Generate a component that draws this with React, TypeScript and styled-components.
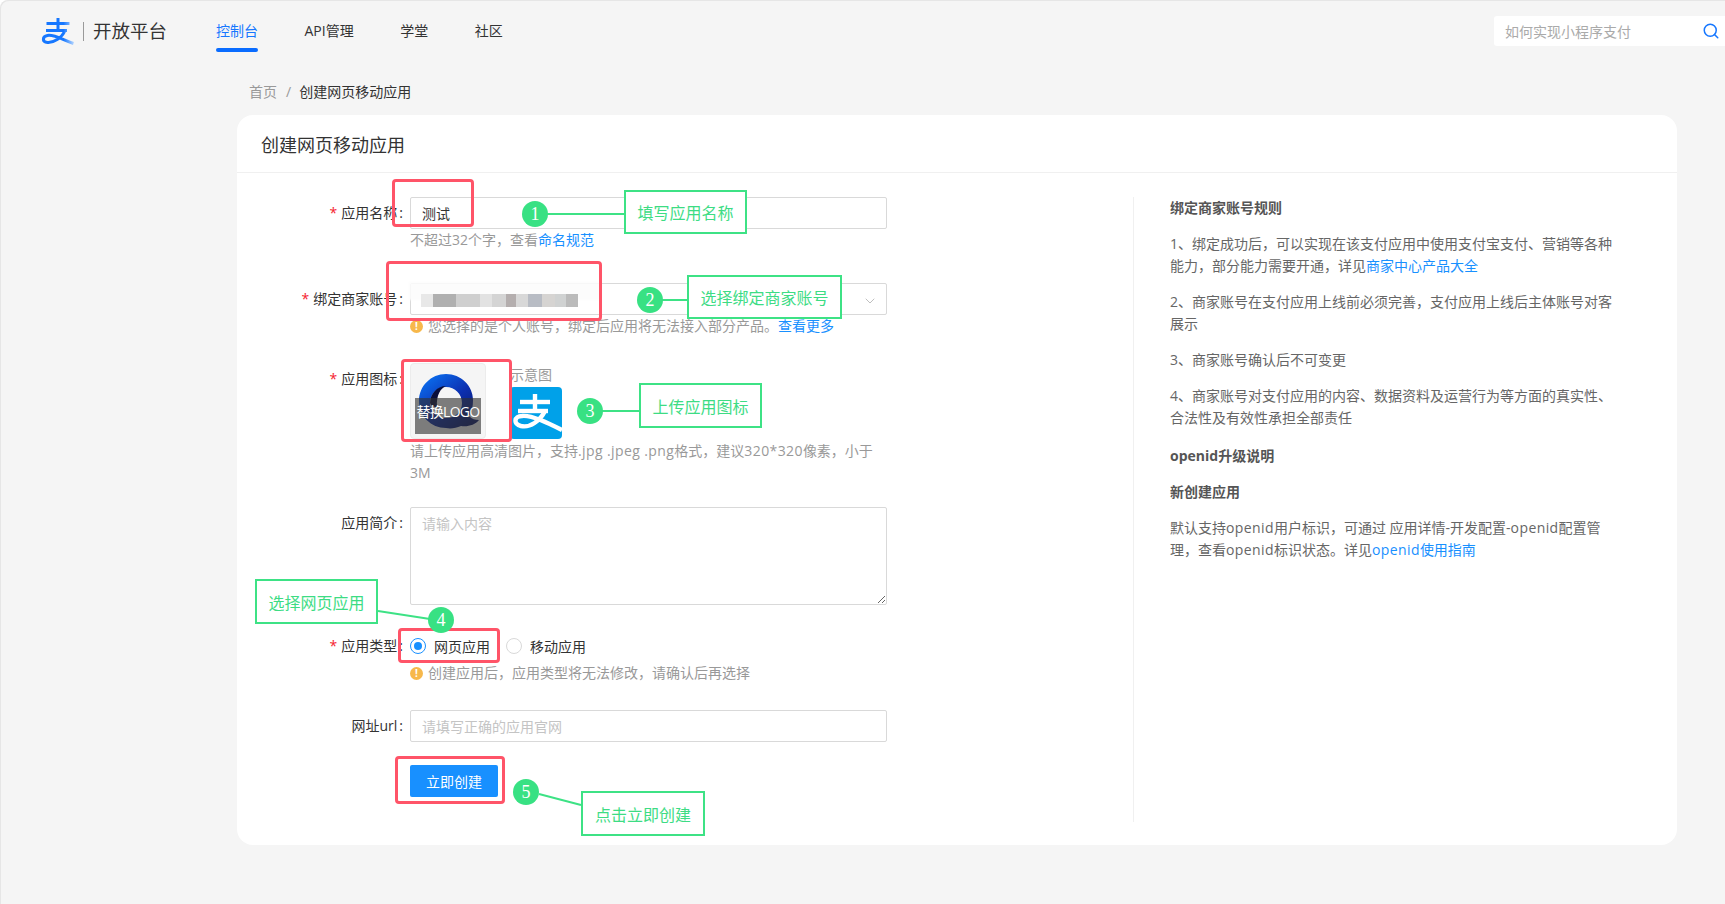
import React from "react";
import styled, { createGlobalStyle } from "styled-components";
import { Search, ChevronDown } from "lucide-react";

const FONT = `"Open Sans", "Noto Sans CJK SC", sans-serif`;

const Global = createGlobalStyle`
  html, body { margin: 0; padding: 0; background: #fff; }
  body { font-family: ${FONT}; font-size: 14px; color: #333; }
  * { box-sizing: border-box; }
`;

const Page = styled.div`
  position: relative;
  width: 1725px;
  height: 904px;
  overflow: hidden;
  background: #f5f5f5;
  border-top-left-radius: 8px;
  box-shadow: inset 1px 1px 0 #e6e6e6;
`;

const TopBar = styled.header`
  display: flex;
  align-items: flex-start;
  height: 64px;
  padding-left: 41px;
`;
const Brand = styled.div`
  display: flex;
  align-items: center;
  width: 124px;
  height: 28px;
  margin-top: 17px;
`;
const BrandDivider = styled.span`
  flex: none;
  width: 1px;
  height: 19px;
  margin: 0 9px;
  background: #9a9a9a;
`;
const BrandName = styled.span`
  font-size: 18.5px;
  line-height: 28px;
  color: #333;
  white-space: nowrap;
`;
const Nav = styled.nav`
  display: flex;
  gap: 46.5px;
  margin-left: 51px;
`;
const NavItem = styled.a<{ $active?: boolean }>`
  position: relative;
  display: block;
  height: 52px;
  padding-top: 20px;
  line-height: 22px;
  font-size: 14px;
  color: ${(p) => (p.$active ? "#1677ff" : "#333")};
  &::after {
    content: "";
    display: ${(p) => (p.$active ? "block" : "none")};
    position: absolute;
    left: 0;
    right: 0;
    bottom: 0;
    height: 4px;
    border-radius: 2px;
    background: #0a6cff;
  }
`;
const SearchBox = styled.div`
  display: flex;
  align-items: center;
  justify-content: space-between;
  width: 231px;
  height: 30px;
  margin: 16px 0 0 auto;
  padding: 0 5px 0 11px;
  background: #fff;
  border-radius: 3px 0 0 3px;
  color: #1677ff;
`;
const SearchHint = styled.span`
  font-size: 14px;
  color: #aaa;
`;

const Crumbs = styled.div`
  display: flex;
  height: 22px;
  margin: 17px 0 12px 249px;
  line-height: 22px;
`;
const Crumb = styled.span<{ $current?: boolean }>`
  color: ${(p) => (p.$current ? "#333" : "#999")};
`;
const CrumbSlash = styled.span`
  margin: 0 8px 0 9px;
  color: #999;
`;

const Card = styled.section`
  width: 1440px;
  height: 730px;
  margin-left: 237px;
  background: #fff;
  border-radius: 16px;
`;
const CardHead = styled.h1`
  height: 58px;
  margin: 0;
  padding-left: 24px;
  font-size: 18px;
  font-weight: 400;
  line-height: 61px;
  color: #333;
  border-bottom: 1px solid #f0f0f0;
`;
const CardBody = styled.div`
  display: flex;
  padding-top: 24px;
`;
const FormCol = styled.div`
  width: 896px;
`;
const Row = styled.div<{ $mb: number }>`
  display: flex;
  margin-bottom: ${(p) => p.$mb}px;
`;
const Label = styled.label`
  flex: none;
  width: 173px;
  padding-right: 7px;
  line-height: 32px;
  text-align: right;
  color: #333;
`;
const Colon = styled.span`
  margin-left: 2px;
`;
const Star = styled.span`
  margin-right: 4px;
  color: #f5222d;
`;
const Control = styled.div`
  width: 477px;
`;
const TextInput = styled.input`
  display: block;
  width: 100%;
  height: 32px;
  padding: 0 11px;
  font: 14px ${FONT};
  color: #333;
  background: #fff;
  border: 1px solid #d9d9d9;
  border-radius: 2px;
  outline: none;
  &::placeholder { color: #c4c4c4; }
`;
const TextArea = styled.textarea`
  display: block;
  width: 100%;
  height: 98px;
  padding: 5px 11px;
  font: 14px/22px ${FONT};
  border: 1px solid #d9d9d9;
  border-radius: 2px;
  outline: none;
  &::placeholder { color: #c4c4c4; }
`;
const Hint = styled.div`
  line-height: 22px;
  color: #999;
`;
const UploadHint = styled(Hint)`
  margin-top: 1px;
`;
const WarnHint = styled(Hint)`
  display: flex;
  align-items: center;
  white-space: nowrap;
`;
const WarnDot = styled.span`
  flex: none;
  display: flex;
  align-items: center;
  justify-content: center;
  width: 13px;
  height: 13px;
  margin-right: 5px;
  border-radius: 50%;
  background: #f7b84b;
  color: #fff;
  font-size: 10px;
  font-weight: 700;
  line-height: 1;
`;
const Link = styled.a`
  color: #1890ff;
`;
const Latin = styled.span`
  letter-spacing: 0.4px;
`;
const SelectBox = styled.div`
  position: relative;
  display: flex;
  align-items: center;
  justify-content: space-between;
  height: 32px;
  padding: 3px 8px 0 10px;
  background: #fff;
  border: 1px solid #d9d9d9;
  border-radius: 2px;
  color: #bfbfbf;
`;
const BlurVeil = styled.span`
  position: absolute;
  top: -2px;
  left: -2px;
  width: 192px;
  height: 18px;
  background: rgba(252, 252, 252, 0.95);
  filter: blur(1px);
`;
const BlurredValue = styled.span`
  position: relative;
  display: block;
  width: 157px;
  height: 13px;
  filter: blur(0.6px);
  background: linear-gradient(
    90deg,
    #e8e8e8 0 12px,
    #b0b0b0 12px 35px,
    #cfcfcf 35px 59px,
    #e2e2e2 59px 71px,
    #d4d4d4 71px 85px,
    #b4aeae 85px 95px,
    #d8d8d8 95px 107px,
    #b8bcc4 107px 121px,
    #d6d4d2 121px 134px,
    #d0d2d2 134px 145px,
    #bbb 145px 157px
  );
`;
const UploadRow = styled.div`
  display: flex;
  height: 76px;
`;
const UploadTile = styled.div`
  position: relative;
  width: 76px;
  height: 76px;
  background: #f5f5f5;
  border: 1px solid #ececec;
  border-radius: 4px;
`;
const QLogo = styled.svg`
  position: absolute;
  top: 9px;
  left: 7px;
`;
const ReplaceMask = styled.div`
  position: absolute;
  left: 4px;
  top: 34px;
  width: 66px;
  height: 36px;
  background: rgba(50, 50, 50, 0.62);
  color: #fff;
  font-size: 14px;
  letter-spacing: -0.7px;
  line-height: 28px;
  text-align: center;
  white-space: nowrap;
`;
const SampleCol = styled.div`
  margin-left: 24px;
  padding-top: 1px;
  color: #999;
  line-height: 22px;
`;
const SampleTile = styled.svg`
  display: block;
  margin-top: 1px;
`;
const RadioGroup = styled.div`
  display: flex;
  align-items: center;
  height: 32px;
`;
const RadioDot = styled.span<{ $on?: boolean }>`
  display: flex;
  align-items: center;
  justify-content: center;
  width: 16px;
  height: 16px;
  margin-right: 8px;
  background: #fff;
  border: 1px solid ${(p) => (p.$on ? "#1890ff" : "#d9d9d9")};
  border-radius: 50%;
  &::after {
    content: "";
    display: ${(p) => (p.$on ? "block" : "none")};
    width: 8px;
    height: 8px;
    border-radius: 50%;
    background: #1890ff;
  }
`;
const RadioText = styled.span`
  margin-right: 16px;
  color: #333;
`;
const PrimaryButton = styled.button`
  display: block;
  width: 88px;
  height: 32px;
  padding: 0;
  font: 14px ${FONT};
  color: #fff;
  background: #1890ff;
  border: 0;
  border-radius: 2px;
`;
const Aside = styled.aside`
  width: 524px;
  height: 625px;
  padding-left: 36px;
  border-left: 1px solid #f0f0f0;
  color: #666;
  line-height: 22px;
`;
const RuleTitle = styled.div`
  margin-bottom: 14px;
  font-weight: 700;
  color: #555;
`;
const UpgradeTitle = styled(RuleTitle)`
  margin-top: 16px;
`;
const RuleText = styled.p`
  width: 444px;
  margin: 0 0 14px;
  &:has(+ ${UpgradeTitle}) { margin-bottom: 0; }
`;

/* annotations drawn on top of the captured page */
const Overlay = styled.div`
  position: absolute;
  inset: 0;
  pointer-events: none;
`;
const Lines = styled.svg`
  position: absolute;
  left: 0;
  top: 0;
`;
type Box = { $x: number; $y: number; $w: number; $h: number };
const RedFrame = styled.div<Box>`
  position: absolute;
  left: ${(p) => p.$x}px;
  top: ${(p) => p.$y}px;
  width: ${(p) => p.$w}px;
  height: ${(p) => p.$h}px;
  border: 3px solid #ff5468;
  border-radius: 4px;
`;
const Callout = styled.div<Box>`
  position: absolute;
  left: ${(p) => p.$x}px;
  top: ${(p) => p.$y}px;
  width: ${(p) => p.$w}px;
  height: ${(p) => p.$h}px;
  display: flex;
  align-items: center;
  justify-content: center;
  background: #fff;
  border: 2px solid #3de285;
  font-size: 16px;
  color: #3ddc84;
  white-space: nowrap;
`;
const Badge = styled.div<{ $x: number; $y: number }>`
  position: absolute;
  left: ${(p) => p.$x}px;
  top: ${(p) => p.$y}px;
  width: 26px;
  height: 26px;
  display: flex;
  align-items: center;
  justify-content: center;
  border-radius: 50%;
  background: #38e183;
  color: #fff;
  font-family: "Liberation Serif", serif;
  font-size: 18px;
`;

const frames = [
  { x: 392, y: 179, w: 82, h: 48 },
  { x: 386, y: 261, w: 216, h: 60 },
  { x: 401, y: 359, w: 111, h: 83 },
  { x: 398, y: 628, w: 102, h: 35 },
  { x: 395, y: 756, w: 110, h: 48 },
];
const callouts = [
  { x: 624, y: 190, w: 123, h: 44, t: "填写应用名称" },
  { x: 687, y: 275, w: 155, h: 44, t: "选择绑定商家账号" },
  { x: 639, y: 383, w: 123, h: 45, t: "上传应用图标" },
  { x: 255, y: 579, w: 123, h: 45, t: "选择网页应用" },
  { x: 581, y: 791, w: 124, h: 45, t: "点击立即创建" },
];
const badges = [
  { x: 522, y: 201, n: 1 },
  { x: 637, y: 287, n: 2 },
  { x: 577, y: 398, n: 3 },
  { x: 428, y: 607, n: 4 },
  { x: 513, y: 779, n: 5 },
];
const lines = [
  [547, 214, 624, 214],
  [662, 300, 687, 300],
  [602, 411, 639, 411],
  [378, 611, 430, 619],
  [539, 794, 581, 805],
];

function AlipayMark({ width, height }: { width: number; height: number }) {
  return (
    <svg width={width} height={height} viewBox="0 0 33 28" fill="none" style={{ flex: "none" }}>
      <defs>
        <linearGradient id="ali" x1="0" y1="0" x2="33" y2="0" gradientUnits="userSpaceOnUse">
          <stop offset="0.68" stopColor="#1677ff" />
          <stop offset="1" stopColor="#b5d6ff" />
        </linearGradient>
      </defs>
      <g stroke="url(#ali)" strokeWidth="3" strokeLinecap="butt">
        <path d="M5.5 6.5H28.5" />
        <path d="M17 1V13" />
        <path d="M5 13.5H26" />
        <path d="M24 13.5C21 21 12 26 6.5 25.5C1 25 1 19.5 6.5 18.5C13 17.2 22 23 32.5 26.5" />
      </g>
    </svg>
  );
}

function Warn() {
  return <WarnDot>!</WarnDot>;
}

function FieldLabel({ text, required }: { text: string; required?: boolean }) {
  return (
    <Label>
      {required && <Star>*</Star>}
      {text}
      <Colon>:</Colon>
    </Label>
  );
}

export default function App() {
  return (
    <Page>
      <Global />
      <TopBar>
        <Brand>
          <AlipayMark width={33} height={28} />
          <BrandDivider />
          <BrandName>开放平台</BrandName>
        </Brand>
        <Nav>
          <NavItem $active>控制台</NavItem>
          <NavItem>API管理</NavItem>
          <NavItem>学堂</NavItem>
          <NavItem>社区</NavItem>
        </Nav>
        <SearchBox>
          <SearchHint>如何实现小程序支付</SearchHint>
          <Search size={18} strokeWidth={2} />
        </SearchBox>
      </TopBar>

      <Crumbs>
        <Crumb>首页</Crumb>
        <CrumbSlash>/</CrumbSlash>
        <Crumb $current>创建网页移动应用</Crumb>
      </Crumbs>

      <Card>
        <CardHead>创建网页移动应用</CardHead>
        <CardBody>
          <FormCol>
            <Row $mb={32}>
              <FieldLabel text="应用名称" required />
              <Control>
                <TextInput readOnly defaultValue="测试" />
                <Hint>不超过32个字，查看<Link>命名规范</Link></Hint>
              </Control>
            </Row>
            <Row $mb={26}>
              <FieldLabel text="绑定商家账号" required />
              <Control>
                <SelectBox>
                  <BlurVeil />
                  <BlurredValue />
                  <ChevronDown size={16} strokeWidth={1.5} />
                </SelectBox>
                <WarnHint>
                  <Warn />您选择的是个人账号，绑定后应用将无法接入部分产品。<Link>查看更多</Link>
                </WarnHint>
              </Control>
            </Row>
            <Row $mb={23}>
              <FieldLabel text="应用图标" required />
              <Control>
                <UploadRow>
                  <UploadTile>
                    <QLogo width="62" height="58" viewBox="0 0 62 58">
                      <defs>
                        <linearGradient id="q" x1="0.1" y1="0" x2="0.85" y2="0.9">
                          <stop offset="0" stopColor="#0a74f5" />
                          <stop offset="0.55" stopColor="#0c2fb0" />
                          <stop offset="1" stopColor="#0b1a6b" />
                        </linearGradient>
                      </defs>
                      <path
                        fill="url(#q)"
                        fillRule="evenodd"
                        d="M28 1C43 1 55 13 55 27C55 33 54 39 51 43C54 46 57 47 61 47C57 52 50 54 43 53C38 55 33 56 28 55C13 55 1 43 1 28C1 13 13 1 28 1ZM28 14C19 14 12 21 12 30C12 39 19 45 28 45C37 45 44 39 44 30C44 21 37 14 28 14Z"
                      />
                      <path d="M12 30C12 21 19 13 28 13C23 15 18 22 19 34C15 34 13 33 12 30Z" fill="#0a0f3c" />
                    </QLogo>
                    <ReplaceMask>替换LOGO</ReplaceMask>
                  </UploadTile>
                  <SampleCol>
                    示意图
                    <SampleTile width="52" height="52" viewBox="0 0 52 52">
                      <rect width="52" height="52" rx="4" fill="#00a1e9" />
                      <g fill="none" stroke="#fff" strokeWidth="4.4">
                        <path d="M10 15H40" />
                        <path d="M25 7V24" />
                        <path d="M8 24H38" />
                        <path d="M35 24C30 34 20 41 11 39C3 37 4 29 12 29C22 28 38 36 52 43" />
                      </g>
                    </SampleTile>
                  </SampleCol>
                </UploadRow>
                <UploadHint>请上传应用高清图片，支持<Latin>.jpg .jpeg .png</Latin>格式，建议<Latin>320*320</Latin>像素，小于<br />3M</UploadHint>
              </Control>
            </Row>
            <Row $mb={25}>
              <FieldLabel text="应用简介" />
              <Control>
                <TextArea placeholder="请输入内容" />
              </Control>
            </Row>
            <Row $mb={26}>
              <FieldLabel text="应用类型" required />
              <Control>
                <RadioGroup>
                  <RadioDot $on />
                  <RadioText>网页应用</RadioText>
                  <RadioDot />
                  <RadioText>移动应用</RadioText>
                </RadioGroup>
                <WarnHint>
                  <Warn />创建应用后，应用类型将无法修改，请确认后再选择
                </WarnHint>
              </Control>
            </Row>
            <Row $mb={23}>
              <FieldLabel text="网址url" />
              <Control>
                <TextInput placeholder="请填写正确的应用官网" />
              </Control>
            </Row>
            <Row $mb={0}>
              <Label />
              <PrimaryButton>立即创建</PrimaryButton>
            </Row>
          </FormCol>
          <Aside>
            <RuleTitle>绑定商家账号规则</RuleTitle>
            <RuleText>1、绑定成功后，可以实现在该支付应用中使用支付宝支付、营销等各种能力，部分能力需要开通，详见<Link>商家中心产品大全</Link></RuleText>
            <RuleText>2、商家账号在支付应用上线前必须完善，支付应用上线后主体账号对客展示</RuleText>
            <RuleText>3、商家账号确认后不可变更</RuleText>
            <RuleText>4、商家账号对支付应用的内容、数据资料及运营行为等方面的真实性、合法性及有效性承担全部责任</RuleText>
            <UpgradeTitle>openid升级说明</UpgradeTitle>
            <RuleTitle>新创建应用</RuleTitle>
            <RuleText>默认支持<Latin>openid</Latin>用户标识，可通过 应用详情-开发配置-<Latin>openid</Latin>配置管理，查看<Latin>openid</Latin>标识状态。详见<Link><Latin>openid</Latin>使用指南</Link></RuleText>
          </Aside>
        </CardBody>
      </Card>

      <Overlay>
        <Lines width="1725" height="904">
          {lines.map(([x1, y1, x2, y2], i) => (
            <line key={i} x1={x1} y1={y1} x2={x2} y2={y2} stroke="#3de285" strokeWidth="2" />
          ))}
        </Lines>
        {frames.map((f, i) => (
          <RedFrame key={i} $x={f.x} $y={f.y} $w={f.w} $h={f.h} />
        ))}
        {callouts.map((c, i) => (
          <Callout key={i} $x={c.x} $y={c.y} $w={c.w} $h={c.h}>{c.t}</Callout>
        ))}
        {badges.map((b) => (
          <Badge key={b.n} $x={b.x} $y={b.y}>{b.n}</Badge>
        ))}
      </Overlay>
    </Page>
  );
}
